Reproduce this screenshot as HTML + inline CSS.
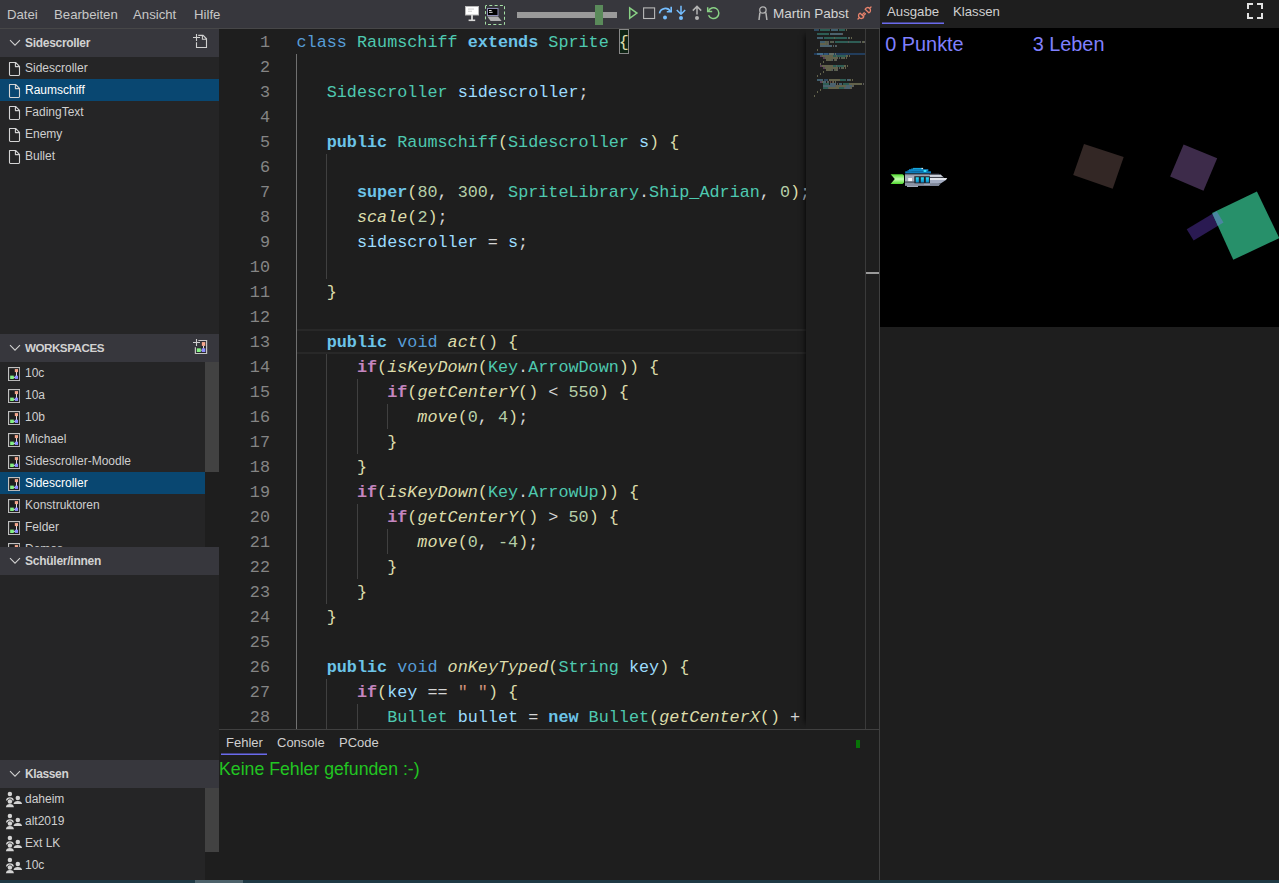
<!DOCTYPE html>
<html lang="de">
<head>
<meta charset="utf-8">
<title>Online-IDE</title>
<style>
*{box-sizing:border-box;margin:0;padding:0}
html,body{width:1279px;height:883px;overflow:hidden;background:#1e1e1e}
body{position:relative;font-family:"Liberation Sans",sans-serif;color:#cccccc;font-size:12px}
.abs{position:absolute}
/* top bar */
#topbar{position:absolute;left:0;top:0;width:880px;height:28px;background:#37373d}
#topline{position:absolute;left:0;top:28px;width:880px;height:1px;background:#474748}
.menu{position:absolute;top:0;height:28px;line-height:29px;font-size:13.2px;color:#c8c8c8;white-space:nowrap}
/* sidebar */
#side{position:absolute;left:0;top:29px;width:219px;height:851px;background:#252526}
.shead{position:absolute;left:0;width:219px;height:28px;background:#37373d}
.shead span{position:absolute;left:25px;top:0;line-height:28px;font-weight:bold;font-size:12px;color:#d2d2d2;white-space:nowrap}
.shead svg.chev{position:absolute;left:9px;top:10px}
.item{position:absolute;left:0;height:22px;line-height:22px;font-size:12px;color:#cfcfcf;white-space:nowrap}
.item span{position:absolute;left:25px;top:0}
.item svg{position:absolute;left:8px;top:4px}
.sel{background:#094771;color:#ffffff}
.sbar{position:absolute;left:205px;width:14px;background:#1e1e1e}
.sthumb{position:absolute;left:205px;width:14px;background:#424242}
/* editor */
#editor{position:absolute;left:219px;top:29px;width:661px;height:700px;background:#1e1e1e;overflow:hidden}
.ln{position:absolute;left:0;width:51px;height:25px;line-height:25px;text-align:right;color:#858585;font-family:"Liberation Mono",monospace;font-size:16.8px;white-space:pre}
.cl{position:absolute;left:77.5px;height:25px;line-height:25px;color:#d4d4d4;font-family:"Liberation Mono",monospace;font-size:16.8px;white-space:pre}
.k{color:#569cd6}.t{color:#4ec9b0}.b{color:#6cc4e8;font-weight:bold}.v{color:#9cdcfe}.m{color:#dcdcaa;font-style:italic}
.c{color:#c586c0;font-weight:bold}.n{color:#b5cea8}.s{color:#ce9178}.p{color:#dcdcaa}.o{color:#d4d4d4}
.pm{color:#dcdcaa}
#bm{position:absolute;left:400px;top:0;width:10px;height:25px;background:#0f2314;border:1px solid #888}
.ig{position:absolute;width:1px;background:#404040}
.iga{background:#707070}
#codeclip{position:absolute;left:0;top:1px;width:587px;height:700px;overflow:hidden}
#curline{position:absolute;left:78px;top:300px;width:509px;height:25px;border-top:2px solid #282828;border-bottom:2px solid #282828}
#mm{position:absolute;left:587px;top:0;width:59px;height:700px;background:#1e1e1e;box-shadow:-6px 0 6px -6px #000}
#mm i{position:absolute;height:1.5px;opacity:.56}
#mmhl{position:absolute;left:8px;top:24px;width:51px;height:2px;background:#223d5c}
#ovl{position:absolute;left:646px;top:0;width:1px;height:700px;background:#3a3a3a}
#ovr{position:absolute;left:660px;top:0;width:1px;height:700px;background:#404040}
#ovmark{position:absolute;left:647px;top:243px;width:13px;height:2px;background:#9a9a9a}
/* bottom panel */
#bline{position:absolute;left:219px;top:729px;width:661px;height:1px;background:#404040}
.tab{position:absolute;font-size:13.2px;color:#d0d0d0;white-space:nowrap;line-height:16px}
.uline{position:absolute;height:2px;background:#6a6aec}
#nofehler{position:absolute;left:219px;top:759px;font-size:17.7px;line-height:20px;color:#22c522;white-space:nowrap}
/* right */
#right{position:absolute;left:880px;top:0;width:399px;height:883px;background:#1e1e1e}
#canvas{position:absolute;left:0;top:28px;width:399px;height:299px;background:#000;overflow:hidden}
.ctext{position:absolute;font-size:19.85px;line-height:22px;color:#8080ff;white-space:nowrap}
#bottombar{position:absolute;left:0;top:880px;width:1279px;height:3px;background:#1f3a45}
#bottomthumb{position:absolute;left:195px;top:880px;width:48px;height:3px;background:#4d636b}
</style>
</head>
<body>
<!-- TOP BAR -->
<div id="topbar">
  <div class="menu" style="left:7px">Datei</div>
  <div class="menu" style="left:54px">Bearbeiten</div>
  <div class="menu" style="left:133px">Ansicht</div>
  <div class="menu" style="left:194px">Hilfe</div>

  <!-- whiteboard icon -->
  <svg class="abs" style="left:464px;top:4px" width="18" height="20" viewBox="0 0 18 20">
    <rect x="1.5" y="2.5" width="13" height="8.5" fill="#ffffff" stroke="#b8b8b8" stroke-width="1"/>
    <rect x="4" y="4.6" width="6" height="0.9" fill="#c8c8c8"/>
    <rect x="4" y="6.8" width="4" height="0.9" fill="#c8c8c8"/>
    <rect x="7" y="11" width="2" height="5" fill="#c8c8c8"/>
    <rect x="4.6" y="15.5" width="6.6" height="1.6" fill="#d8d8d8"/>
  </svg>
  <!-- laptop icon with dashed box -->
  <svg class="abs" style="left:484px;top:4px" width="22" height="22" viewBox="0 0 22 22">
    <rect x="1.5" y="1.5" width="19" height="19" fill="none" stroke="#a6e0a6" stroke-width="1" stroke-dasharray="3 2.3" stroke-dashoffset="1.5"/>
    <rect x="3.5" y="4.5" width="10.5" height="7" fill="#000" stroke="#8c8cb4" stroke-width="1"/>
    <rect x="5" y="6" width="2.6" height="1" fill="#e0e0e0"/>
    <rect x="5" y="7.8" width="3.6" height="1" fill="#e0e0e0"/>
    <polygon points="3.3,12.4 14,12.4 17.6,17 6.6,17" fill="#b0b0b0"/>
  </svg>
  <!-- slider -->
  <div class="abs" style="left:517px;top:12px;width:100px;height:6px;background:#9a9a9a"></div>
  <div class="abs" style="left:595px;top:5px;width:8px;height:20px;background:#5a8a5a"></div>
  <!-- run controls -->
  <svg class="abs" style="left:626px;top:2px" width="100" height="24" viewBox="0 0 100 24">
    <!-- play -->
    <polygon points="3.7,5.9 3.7,16.3 10.9,11.1" fill="none" stroke="#89d185" stroke-width="1.5" stroke-linejoin="miter"/>
    <!-- stop -->
    <rect x="17.6" y="5.9" width="11" height="10.6" fill="none" stroke="#b8b8b8" stroke-width="1.1"/>
    <!-- step over -->
    <path d="M33.5 11.4 A5.9 5.9 0 0 1 44.4 9.4" fill="none" stroke="#75beff" stroke-width="1.7"/>
    <path d="M45.2 4.8 L45.2 9.8 L40.8 9.8" fill="none" stroke="#75beff" stroke-width="1.6"/>
    <circle cx="39" cy="15.4" r="2" fill="#75beff"/>
    <!-- step into -->
    <path d="M55 3.8 L55 11.8 M50.8 8 L55 12.2 L59.2 8" fill="none" stroke="#75beff" stroke-width="1.5"/>
    <circle cx="55" cy="16" r="2" fill="#75beff"/>
    <!-- step out -->
    <path d="M71 12.6 L71 4.6 M66.8 8.6 L71 4.4 L75.2 8.6" fill="none" stroke="#b4b4b4" stroke-width="1.5"/>
    <circle cx="71" cy="16" r="2" fill="#b4b4b4"/>
    <!-- restart -->
    <path d="M82.4 9.2 A5.4 5.4 0 1 1 82.5 13.3" fill="none" stroke="#89d185" stroke-width="1.5"/>
    <path d="M81.7 5.2 L81.7 9.6 L86.2 9.6" fill="none" stroke="#89d185" stroke-width="1.5"/>
  </svg>
  <!-- user -->
  <svg class="abs" style="left:756px;top:5px" width="14" height="17" viewBox="0 0 14 17">
    <circle cx="6.9" cy="5" r="3.2" fill="none" stroke="#b4b4b4" stroke-width="1.3"/>
    <path d="M3 15 L3.9 7.6 M10.9 15 L9.9 7.6" fill="none" stroke="#b4b4b4" stroke-width="1.5"/>
  </svg>
  <div class="menu" style="left:773px;top:-1px;color:#d4d4d4;font-size:13.5px">Martin Pabst</div>
  <!-- plug -->
  <svg class="abs" style="left:856px;top:5px" width="17" height="16" viewBox="0 0 17 16">
    <g fill="none" stroke="#e8836c" stroke-width="1.3" stroke-linecap="round">
      <path d="M9.2 4.2 L12.8 7.8 A2.6 2.6 0 0 0 13.6 3.4 A2.6 2.6 0 0 0 9.2 4.2 Z"/>
      <path d="M7.8 11.8 L4.2 8.2 A2.6 2.6 0 0 0 3.4 12.6 A2.6 2.6 0 0 0 7.8 11.8 Z"/>
      <path d="M13.8 3.2 L15 2 M3.2 12.8 L2 14 M6.6 9.4 L8.2 7.8 M7.8 10.4 L9.4 8.8"/>
    </g>
  </svg>
</div>
<div id="topline"></div>

<!-- SIDEBAR -->
<div id="side">
  <div class="shead" style="top:0">
    <svg class="chev" width="12" height="8" viewBox="0 0 12 8"><path d="M1 1.2 L6 6.2 L11 1.2" fill="none" stroke="#d0d0d0" stroke-width="1.1"/></svg>
    <span style="letter-spacing:-0.3px">Sidescroller</span>
    <svg class="abs" style="left:192px;top:4px" width="16" height="16" viewBox="0 0 16 16">
      <path d="M1 4.5 H8 M4.5 1 V8" stroke="#d0d0d0" stroke-width="1.1" fill="none"/>
      <path d="M4.5 9.2 V14.5 H14.5 V5.8 L11.1 2.4 H6.2 M10.4 2.4 V6.3 H14.5" stroke="#d0d0d0" stroke-width="1.1" fill="none"/>
    </svg>
  </div>
  <div class="item" style="top:28px;width:219px"><svg width="13" height="16" viewBox="0 0 13 16"><path d="M1.5 1.5 H7.6 L11.5 5.4 V13.6 Q11.5 14.5 10.6 14.5 H2.4 Q1.5 14.5 1.5 13.6 Z M7.4 1.6 V5.6 H11.4" fill="none" stroke="#d4d4d4" stroke-width="1.1" stroke-linejoin="round"/></svg><span>Sidescroller</span></div>
<div class="item sel" style="top:50px;width:219px"><svg width="13" height="16" viewBox="0 0 13 16"><path d="M1.5 1.5 H7.6 L11.5 5.4 V13.6 Q11.5 14.5 10.6 14.5 H2.4 Q1.5 14.5 1.5 13.6 Z M7.4 1.6 V5.6 H11.4" fill="none" stroke="#d4d4d4" stroke-width="1.1" stroke-linejoin="round"/></svg><span>Raumschiff</span></div>
<div class="item" style="top:72px;width:219px"><svg width="13" height="16" viewBox="0 0 13 16"><path d="M1.5 1.5 H7.6 L11.5 5.4 V13.6 Q11.5 14.5 10.6 14.5 H2.4 Q1.5 14.5 1.5 13.6 Z M7.4 1.6 V5.6 H11.4" fill="none" stroke="#d4d4d4" stroke-width="1.1" stroke-linejoin="round"/></svg><span>FadingText</span></div>
<div class="item" style="top:94px;width:219px"><svg width="13" height="16" viewBox="0 0 13 16"><path d="M1.5 1.5 H7.6 L11.5 5.4 V13.6 Q11.5 14.5 10.6 14.5 H2.4 Q1.5 14.5 1.5 13.6 Z M7.4 1.6 V5.6 H11.4" fill="none" stroke="#d4d4d4" stroke-width="1.1" stroke-linejoin="round"/></svg><span>Enemy</span></div>
<div class="item" style="top:116px;width:219px"><svg width="13" height="16" viewBox="0 0 13 16"><path d="M1.5 1.5 H7.6 L11.5 5.4 V13.6 Q11.5 14.5 10.6 14.5 H2.4 Q1.5 14.5 1.5 13.6 Z M7.4 1.6 V5.6 H11.4" fill="none" stroke="#d4d4d4" stroke-width="1.1" stroke-linejoin="round"/></svg><span>Bullet</span></div>

  <div class="shead" style="top:305px">
    <svg class="chev" width="12" height="8" viewBox="0 0 12 8"><path d="M1 1.2 L6 6.2 L11 1.2" fill="none" stroke="#d0d0d0" stroke-width="1.1"/></svg>
    <span style="font-size:11.6px;letter-spacing:-0.46px">WORKSPACES</span>
    <svg class="abs" style="left:192px;top:4px" width="18" height="18" viewBox="0 0 18 18">
      <rect x="9" y="3.4" width="5" height="11.6" fill="#2a2a2e"/><rect x="4" y="9.6" width="6" height="5.4" fill="#2a2a2e"/>
      <path d="M1 4.5 H8 M4.5 1 V8" stroke="#d0d0d0" stroke-width="1.1" fill="none"/>
      <path d="M3.4 9.3 V15.5 H14.6 V2.5 H6.3" stroke="#c4c4c4" stroke-width="1.2" fill="none"/>
      <rect x="9.8" y="4.1" width="3.5" height="3.8" fill="#f6a88e"/>
      <rect x="4.8" y="10.3" width="4" height="3.7" fill="#84f084"/>
      <rect x="9.8" y="10.3" width="3.5" height="3.7" fill="#8c8cff"/>
      <path d="M11.5 7.9 V10.3 M8.8 12.2 H9.8" stroke="#f0f0f0" stroke-width="0.9"/>
    </svg>
  </div>
  <div class="abs" style="left:0;top:333px;width:219px;height:185px;overflow:hidden">
    <div class="item" style="top:0px;width:205px"><svg style="top:4.8px" width="12.3" height="14.2" viewBox="0 0 13 15" preserveAspectRatio="none"><rect x="0.6" y="0.6" width="11.8" height="13.8" fill="#1e1e1e" stroke="#c0c0c0" stroke-width="1.2"/><path d="M9 4.5 V9.5 M5 11 H7.4" stroke="#fff" stroke-width="0.9"/><rect x="7.2" y="2.2" width="3.4" height="3.2" fill="#f4a58a"/><rect x="2.3" y="9.1" width="3.8" height="3.6" fill="#84f084"/><rect x="7.2" y="9.2" width="3.4" height="3.4" fill="#8c8cff"/></svg><span>10c</span></div>
<div class="item" style="top:22px;width:205px"><svg style="top:4.8px" width="12.3" height="14.2" viewBox="0 0 13 15" preserveAspectRatio="none"><rect x="0.6" y="0.6" width="11.8" height="13.8" fill="#1e1e1e" stroke="#c0c0c0" stroke-width="1.2"/><path d="M9 4.5 V9.5 M5 11 H7.4" stroke="#fff" stroke-width="0.9"/><rect x="7.2" y="2.2" width="3.4" height="3.2" fill="#f4a58a"/><rect x="2.3" y="9.1" width="3.8" height="3.6" fill="#84f084"/><rect x="7.2" y="9.2" width="3.4" height="3.4" fill="#8c8cff"/></svg><span>10a</span></div>
<div class="item" style="top:44px;width:205px"><svg style="top:4.8px" width="12.3" height="14.2" viewBox="0 0 13 15" preserveAspectRatio="none"><rect x="0.6" y="0.6" width="11.8" height="13.8" fill="#1e1e1e" stroke="#c0c0c0" stroke-width="1.2"/><path d="M9 4.5 V9.5 M5 11 H7.4" stroke="#fff" stroke-width="0.9"/><rect x="7.2" y="2.2" width="3.4" height="3.2" fill="#f4a58a"/><rect x="2.3" y="9.1" width="3.8" height="3.6" fill="#84f084"/><rect x="7.2" y="9.2" width="3.4" height="3.4" fill="#8c8cff"/></svg><span>10b</span></div>
<div class="item" style="top:66px;width:205px"><svg style="top:4.8px" width="12.3" height="14.2" viewBox="0 0 13 15" preserveAspectRatio="none"><rect x="0.6" y="0.6" width="11.8" height="13.8" fill="#1e1e1e" stroke="#c0c0c0" stroke-width="1.2"/><path d="M9 4.5 V9.5 M5 11 H7.4" stroke="#fff" stroke-width="0.9"/><rect x="7.2" y="2.2" width="3.4" height="3.2" fill="#f4a58a"/><rect x="2.3" y="9.1" width="3.8" height="3.6" fill="#84f084"/><rect x="7.2" y="9.2" width="3.4" height="3.4" fill="#8c8cff"/></svg><span>Michael</span></div>
<div class="item" style="top:88px;width:205px"><svg style="top:4.8px" width="12.3" height="14.2" viewBox="0 0 13 15" preserveAspectRatio="none"><rect x="0.6" y="0.6" width="11.8" height="13.8" fill="#1e1e1e" stroke="#c0c0c0" stroke-width="1.2"/><path d="M9 4.5 V9.5 M5 11 H7.4" stroke="#fff" stroke-width="0.9"/><rect x="7.2" y="2.2" width="3.4" height="3.2" fill="#f4a58a"/><rect x="2.3" y="9.1" width="3.8" height="3.6" fill="#84f084"/><rect x="7.2" y="9.2" width="3.4" height="3.4" fill="#8c8cff"/></svg><span>Sidescroller-Moodle</span></div>
<div class="item sel" style="top:110px;width:205px"><svg style="top:4.8px" width="12.3" height="14.2" viewBox="0 0 13 15" preserveAspectRatio="none"><rect x="0.6" y="0.6" width="11.8" height="13.8" fill="#1e1e1e" stroke="#c0c0c0" stroke-width="1.2"/><path d="M9 4.5 V9.5 M5 11 H7.4" stroke="#fff" stroke-width="0.9"/><rect x="7.2" y="2.2" width="3.4" height="3.2" fill="#f4a58a"/><rect x="2.3" y="9.1" width="3.8" height="3.6" fill="#84f084"/><rect x="7.2" y="9.2" width="3.4" height="3.4" fill="#8c8cff"/></svg><span>Sidescroller</span></div>
<div class="item" style="top:132px;width:205px"><svg style="top:4.8px" width="12.3" height="14.2" viewBox="0 0 13 15" preserveAspectRatio="none"><rect x="0.6" y="0.6" width="11.8" height="13.8" fill="#1e1e1e" stroke="#c0c0c0" stroke-width="1.2"/><path d="M9 4.5 V9.5 M5 11 H7.4" stroke="#fff" stroke-width="0.9"/><rect x="7.2" y="2.2" width="3.4" height="3.2" fill="#f4a58a"/><rect x="2.3" y="9.1" width="3.8" height="3.6" fill="#84f084"/><rect x="7.2" y="9.2" width="3.4" height="3.4" fill="#8c8cff"/></svg><span>Konstruktoren</span></div>
<div class="item" style="top:154px;width:205px"><svg style="top:4.8px" width="12.3" height="14.2" viewBox="0 0 13 15" preserveAspectRatio="none"><rect x="0.6" y="0.6" width="11.8" height="13.8" fill="#1e1e1e" stroke="#c0c0c0" stroke-width="1.2"/><path d="M9 4.5 V9.5 M5 11 H7.4" stroke="#fff" stroke-width="0.9"/><rect x="7.2" y="2.2" width="3.4" height="3.2" fill="#f4a58a"/><rect x="2.3" y="9.1" width="3.8" height="3.6" fill="#84f084"/><rect x="7.2" y="9.2" width="3.4" height="3.4" fill="#8c8cff"/></svg><span>Felder</span></div>
<div class="item" style="top:176px;width:205px"><svg style="top:4.8px" width="12.3" height="14.2" viewBox="0 0 13 15" preserveAspectRatio="none"><rect x="0.6" y="0.6" width="11.8" height="13.8" fill="#1e1e1e" stroke="#c0c0c0" stroke-width="1.2"/><path d="M9 4.5 V9.5 M5 11 H7.4" stroke="#fff" stroke-width="0.9"/><rect x="7.2" y="2.2" width="3.4" height="3.2" fill="#f4a58a"/><rect x="2.3" y="9.1" width="3.8" height="3.6" fill="#84f084"/><rect x="7.2" y="9.2" width="3.4" height="3.4" fill="#8c8cff"/></svg><span>Demos</span></div>

  </div>
  <div class="sbar" style="top:333px;height:185px"></div>
  <div class="sthumb" style="top:333px;height:110px"></div>
  <div class="shead" style="top:518px">
    <svg class="chev" width="12" height="8" viewBox="0 0 12 8"><path d="M1 1.2 L6 6.2 L11 1.2" fill="none" stroke="#d0d0d0" stroke-width="1.1"/></svg>
    <span style="letter-spacing:-0.25px">Schüler/innen</span>
  </div>
  <div class="shead" style="top:731px">
    <svg class="chev" width="12" height="8" viewBox="0 0 12 8"><path d="M1 1.2 L6 6.2 L11 1.2" fill="none" stroke="#d0d0d0" stroke-width="1.1"/></svg>
    <span style="letter-spacing:-0.38px">Klassen</span>
  </div>
  <div class="abs" style="left:0;top:759px;width:219px;height:92px;overflow:hidden">
    <div class="item" style="top:0px;width:205px"><svg style="left:0;top:0" width="24" height="22" viewBox="0 0 24 22"><g fill="#d4d4d4"><circle cx="9.9" cy="6.1" r="2.25"/><path d="M5.9 12.4 Q6.4 9.2 9.9 9.2 Q13.4 9.2 13.9 12.4 L12.6 12.4 Q11.6 10.6 9.9 10.6 Q8.2 10.6 7.2 12.4 Z"/><circle cx="9.9" cy="13.4" r="2.25"/><path d="M5.9 19.2 Q6.3 16 9.9 16 Q13.5 16 13.9 19.2 Z"/><circle cx="17.8" cy="10" r="2.25"/><path d="M13.5 16 Q14 12.9 17.8 12.9 Q21.6 12.9 22.1 16 Z"/></g></svg><span>daheim</span></div>
<div class="item" style="top:22px;width:205px"><svg style="left:0;top:0" width="24" height="22" viewBox="0 0 24 22"><g fill="#d4d4d4"><circle cx="9.9" cy="6.1" r="2.25"/><path d="M5.9 12.4 Q6.4 9.2 9.9 9.2 Q13.4 9.2 13.9 12.4 L12.6 12.4 Q11.6 10.6 9.9 10.6 Q8.2 10.6 7.2 12.4 Z"/><circle cx="9.9" cy="13.4" r="2.25"/><path d="M5.9 19.2 Q6.3 16 9.9 16 Q13.5 16 13.9 19.2 Z"/><circle cx="17.8" cy="10" r="2.25"/><path d="M13.5 16 Q14 12.9 17.8 12.9 Q21.6 12.9 22.1 16 Z"/></g></svg><span>alt2019</span></div>
<div class="item" style="top:44px;width:205px"><svg style="left:0;top:0" width="24" height="22" viewBox="0 0 24 22"><g fill="#d4d4d4"><circle cx="9.9" cy="6.1" r="2.25"/><path d="M5.9 12.4 Q6.4 9.2 9.9 9.2 Q13.4 9.2 13.9 12.4 L12.6 12.4 Q11.6 10.6 9.9 10.6 Q8.2 10.6 7.2 12.4 Z"/><circle cx="9.9" cy="13.4" r="2.25"/><path d="M5.9 19.2 Q6.3 16 9.9 16 Q13.5 16 13.9 19.2 Z"/><circle cx="17.8" cy="10" r="2.25"/><path d="M13.5 16 Q14 12.9 17.8 12.9 Q21.6 12.9 22.1 16 Z"/></g></svg><span>Ext LK</span></div>
<div class="item" style="top:66px;width:205px"><svg style="left:0;top:0" width="24" height="22" viewBox="0 0 24 22"><g fill="#d4d4d4"><circle cx="9.9" cy="6.1" r="2.25"/><path d="M5.9 12.4 Q6.4 9.2 9.9 9.2 Q13.4 9.2 13.9 12.4 L12.6 12.4 Q11.6 10.6 9.9 10.6 Q8.2 10.6 7.2 12.4 Z"/><circle cx="9.9" cy="13.4" r="2.25"/><path d="M5.9 19.2 Q6.3 16 9.9 16 Q13.5 16 13.9 19.2 Z"/><circle cx="17.8" cy="10" r="2.25"/><path d="M13.5 16 Q14 12.9 17.8 12.9 Q21.6 12.9 22.1 16 Z"/></g></svg><span>10c</span></div>

  </div>
  <div class="sbar" style="top:759px;height:92px"></div>
  <div class="sthumb" style="top:759px;height:64px"></div>
</div>

<!-- EDITOR -->
<div id="editor">
<div class="ig iga" style="left:77.0px;top:25px;height:675px"></div>
<div class="ig" style="left:107.2px;top:125px;height:125px"></div>
<div class="ig" style="left:107.2px;top:325px;height:250px"></div>
<div class="ig" style="left:107.2px;top:650px;height:50px"></div>
<div class="ig" style="left:137.5px;top:350px;height:75px"></div>
<div class="ig" style="left:137.5px;top:475px;height:75px"></div>
<div class="ig" style="left:137.5px;top:675px;height:25px"></div>
<div class="ig" style="left:167.7px;top:375px;height:25px"></div>
<div class="ig" style="left:167.7px;top:500px;height:25px"></div>

<div id="curline"></div><div id="bm"></div>
<div id="codeclip">
<div class="ln" style="top:0px">1</div><div class="cl" style="top:0px"><span class="k">class</span> <span class="t">Raumschiff</span> <span class="b">extends</span> <span class="t">Sprite</span> <span class="pm">{</span></div>
<div class="ln" style="top:25px">2</div><div class="cl" style="top:25px"></div>
<div class="ln" style="top:50px">3</div><div class="cl" style="top:50px">   <span class="t">Sidescroller</span> <span class="v">sidescroller</span><span class="o">;</span></div>
<div class="ln" style="top:75px">4</div><div class="cl" style="top:75px"></div>
<div class="ln" style="top:100px">5</div><div class="cl" style="top:100px">   <span class="b">public</span> <span class="t">Raumschiff</span><span class="p">(</span><span class="t">Sidescroller</span> <span class="v">s</span><span class="p">)</span> <span class="p">{</span></div>
<div class="ln" style="top:125px">6</div><div class="cl" style="top:125px"></div>
<div class="ln" style="top:150px">7</div><div class="cl" style="top:150px">      <span class="b">super</span><span class="p">(</span><span class="n">80</span><span class="o">, </span><span class="n">300</span><span class="o">, </span><span class="t">SpriteLibrary</span><span class="o">.</span><span class="t">Ship_Adrian</span><span class="o">, </span><span class="n">0</span><span class="p">)</span><span class="o">;</span></div>
<div class="ln" style="top:175px">8</div><div class="cl" style="top:175px">      <span class="m">scale</span><span class="p">(</span><span class="n">2</span><span class="p">)</span><span class="o">;</span></div>
<div class="ln" style="top:200px">9</div><div class="cl" style="top:200px">      <span class="v">sidescroller</span><span class="o"> = </span><span class="v">s</span><span class="o">;</span></div>
<div class="ln" style="top:225px">10</div><div class="cl" style="top:225px"></div>
<div class="ln" style="top:250px">11</div><div class="cl" style="top:250px">   <span class="p">}</span></div>
<div class="ln" style="top:275px">12</div><div class="cl" style="top:275px"></div>
<div class="ln" style="top:300px">13</div><div class="cl" style="top:300px">   <span class="b">public</span> <span class="k">void</span> <span class="m">act</span><span class="p">()</span> <span class="p">{</span></div>
<div class="ln" style="top:325px">14</div><div class="cl" style="top:325px">      <span class="c">if</span><span class="p">(</span><span class="m">isKeyDown</span><span class="p">(</span><span class="t">Key</span><span class="o">.</span><span class="t">ArrowDown</span><span class="p">))</span> <span class="p">{</span></div>
<div class="ln" style="top:350px">15</div><div class="cl" style="top:350px">         <span class="c">if</span><span class="p">(</span><span class="m">getCenterY</span><span class="p">()</span><span class="o"> &lt; </span><span class="n">550</span><span class="p">)</span> <span class="p">{</span></div>
<div class="ln" style="top:375px">16</div><div class="cl" style="top:375px">            <span class="m">move</span><span class="p">(</span><span class="n">0</span><span class="o">, </span><span class="n">4</span><span class="p">)</span><span class="o">;</span></div>
<div class="ln" style="top:400px">17</div><div class="cl" style="top:400px">         <span class="p">}</span></div>
<div class="ln" style="top:425px">18</div><div class="cl" style="top:425px">      <span class="p">}</span></div>
<div class="ln" style="top:450px">19</div><div class="cl" style="top:450px">      <span class="c">if</span><span class="p">(</span><span class="m">isKeyDown</span><span class="p">(</span><span class="t">Key</span><span class="o">.</span><span class="t">ArrowUp</span><span class="p">))</span> <span class="p">{</span></div>
<div class="ln" style="top:475px">20</div><div class="cl" style="top:475px">         <span class="c">if</span><span class="p">(</span><span class="m">getCenterY</span><span class="p">()</span><span class="o"> &gt; </span><span class="n">50</span><span class="p">)</span> <span class="p">{</span></div>
<div class="ln" style="top:500px">21</div><div class="cl" style="top:500px">            <span class="m">move</span><span class="p">(</span><span class="n">0</span><span class="o">, </span><span class="n">-4</span><span class="p">)</span><span class="o">;</span></div>
<div class="ln" style="top:525px">22</div><div class="cl" style="top:525px">         <span class="p">}</span></div>
<div class="ln" style="top:550px">23</div><div class="cl" style="top:550px">      <span class="p">}</span></div>
<div class="ln" style="top:575px">24</div><div class="cl" style="top:575px">   <span class="p">}</span></div>
<div class="ln" style="top:600px">25</div><div class="cl" style="top:600px"></div>
<div class="ln" style="top:625px">26</div><div class="cl" style="top:625px">   <span class="b">public</span> <span class="k">void</span> <span class="m">onKeyTyped</span><span class="p">(</span><span class="t">String</span> <span class="v">key</span><span class="p">)</span> <span class="p">{</span></div>
<div class="ln" style="top:650px">27</div><div class="cl" style="top:650px">      <span class="c">if</span><span class="p">(</span><span class="v">key</span><span class="o"> == </span><span class="s">" "</span><span class="p">)</span> <span class="p">{</span></div>
<div class="ln" style="top:675px">28</div><div class="cl" style="top:675px">         <span class="t">Bullet</span> <span class="v">bullet</span><span class="o"> = </span><span class="b">new</span> <span class="t">Bullet</span><span class="p">(</span><span class="m">getCenterX</span><span class="p">()</span><span class="o"> +</span></div>
</div>
<div id="mm">
<div id="mmhl"></div>
<i style="left:8.0px;top:0.3px;width:5.0px;background:#3f6d93"></i><i style="left:14.0px;top:0.3px;width:10.0px;background:#3a8f80"></i><i style="left:25.0px;top:0.3px;width:7.0px;background:#5d93ad"></i><i style="left:33.0px;top:0.3px;width:6.0px;background:#3a8f80"></i><i style="left:40.0px;top:0.3px;width:1.0px;background:#98986f"></i>

<i style="left:11.0px;top:4.3px;width:12.0px;background:#3a8f80"></i><i style="left:24.0px;top:4.3px;width:12.0px;background:#6f97ad"></i><i style="left:36.0px;top:4.3px;width:1.0px;background:#8a8a8a"></i>

<i style="left:11.0px;top:8.3px;width:6.0px;background:#5d93ad"></i><i style="left:18.0px;top:8.3px;width:10.0px;background:#3a8f80"></i><i style="left:28.0px;top:8.3px;width:1.0px;background:#98986f"></i><i style="left:29.0px;top:8.3px;width:12.0px;background:#3a8f80"></i><i style="left:42.0px;top:8.3px;width:1.0px;background:#6f97ad"></i><i style="left:43.0px;top:8.3px;width:1.0px;background:#98986f"></i><i style="left:45.0px;top:8.3px;width:1.0px;background:#98986f"></i>

<i style="left:14.0px;top:12.3px;width:5.0px;background:#5d93ad"></i><i style="left:19.0px;top:12.3px;width:1.0px;background:#98986f"></i><i style="left:20.0px;top:12.3px;width:2.0px;background:#7f8f76"></i><i style="left:22.0px;top:12.3px;width:1.0px;background:#8a8a8a"></i><i style="left:24.0px;top:12.3px;width:3.0px;background:#7f8f76"></i><i style="left:27.0px;top:12.3px;width:1.0px;background:#8a8a8a"></i><i style="left:29.0px;top:12.3px;width:13.0px;background:#3a8f80"></i><i style="left:42.0px;top:12.3px;width:1.0px;background:#8a8a8a"></i><i style="left:43.0px;top:12.3px;width:11.0px;background:#3a8f80"></i><i style="left:54.0px;top:12.3px;width:1.0px;background:#8a8a8a"></i><i style="left:56.0px;top:12.3px;width:1.0px;background:#7f8f76"></i><i style="left:57.0px;top:12.3px;width:1.0px;background:#98986f"></i><i style="left:58.0px;top:12.3px;width:1.0px;background:#8a8a8a"></i>
<i style="left:14.0px;top:14.3px;width:5.0px;background:#98986f"></i><i style="left:19.0px;top:14.3px;width:1.0px;background:#98986f"></i><i style="left:20.0px;top:14.3px;width:1.0px;background:#7f8f76"></i><i style="left:21.0px;top:14.3px;width:1.0px;background:#98986f"></i><i style="left:22.0px;top:14.3px;width:1.0px;background:#8a8a8a"></i>
<i style="left:14.0px;top:16.3px;width:12.0px;background:#6f97ad"></i><i style="left:27.0px;top:16.3px;width:1.0px;background:#8a8a8a"></i><i style="left:29.0px;top:16.3px;width:1.0px;background:#6f97ad"></i><i style="left:30.0px;top:16.3px;width:1.0px;background:#8a8a8a"></i>

<i style="left:11.0px;top:20.3px;width:1.0px;background:#98986f"></i>

<i style="left:11.0px;top:24.3px;width:6.0px;background:#5d93ad"></i><i style="left:18.0px;top:24.3px;width:4.0px;background:#3f6d93"></i><i style="left:23.0px;top:24.3px;width:3.0px;background:#98986f"></i><i style="left:26.0px;top:24.3px;width:2.0px;background:#98986f"></i><i style="left:29.0px;top:24.3px;width:1.0px;background:#98986f"></i>
<i style="left:14.0px;top:26.3px;width:2.0px;background:#8a5f86"></i><i style="left:16.0px;top:26.3px;width:1.0px;background:#98986f"></i><i style="left:17.0px;top:26.3px;width:9.0px;background:#98986f"></i><i style="left:26.0px;top:26.3px;width:1.0px;background:#98986f"></i><i style="left:27.0px;top:26.3px;width:3.0px;background:#3a8f80"></i><i style="left:30.0px;top:26.3px;width:1.0px;background:#8a8a8a"></i><i style="left:31.0px;top:26.3px;width:9.0px;background:#3a8f80"></i><i style="left:40.0px;top:26.3px;width:2.0px;background:#98986f"></i><i style="left:43.0px;top:26.3px;width:1.0px;background:#98986f"></i>
<i style="left:17.0px;top:28.3px;width:2.0px;background:#8a5f86"></i><i style="left:19.0px;top:28.3px;width:1.0px;background:#98986f"></i><i style="left:20.0px;top:28.3px;width:10.0px;background:#98986f"></i><i style="left:30.0px;top:28.3px;width:2.0px;background:#98986f"></i><i style="left:33.0px;top:28.3px;width:1.0px;background:#8a8a8a"></i><i style="left:35.0px;top:28.3px;width:3.0px;background:#7f8f76"></i><i style="left:38.0px;top:28.3px;width:1.0px;background:#98986f"></i><i style="left:40.0px;top:28.3px;width:1.0px;background:#98986f"></i>
<i style="left:20.0px;top:30.3px;width:4.0px;background:#98986f"></i><i style="left:24.0px;top:30.3px;width:1.0px;background:#98986f"></i><i style="left:25.0px;top:30.3px;width:1.0px;background:#7f8f76"></i><i style="left:26.0px;top:30.3px;width:1.0px;background:#8a8a8a"></i><i style="left:28.0px;top:30.3px;width:1.0px;background:#7f8f76"></i><i style="left:29.0px;top:30.3px;width:1.0px;background:#98986f"></i><i style="left:30.0px;top:30.3px;width:1.0px;background:#8a8a8a"></i>
<i style="left:17.0px;top:32.3px;width:1.0px;background:#98986f"></i>
<i style="left:14.0px;top:34.3px;width:1.0px;background:#98986f"></i>
<i style="left:14.0px;top:36.3px;width:2.0px;background:#8a5f86"></i><i style="left:16.0px;top:36.3px;width:1.0px;background:#98986f"></i><i style="left:17.0px;top:36.3px;width:9.0px;background:#98986f"></i><i style="left:26.0px;top:36.3px;width:1.0px;background:#98986f"></i><i style="left:27.0px;top:36.3px;width:3.0px;background:#3a8f80"></i><i style="left:30.0px;top:36.3px;width:1.0px;background:#8a8a8a"></i><i style="left:31.0px;top:36.3px;width:7.0px;background:#3a8f80"></i><i style="left:38.0px;top:36.3px;width:2.0px;background:#98986f"></i><i style="left:41.0px;top:36.3px;width:1.0px;background:#98986f"></i>
<i style="left:17.0px;top:38.3px;width:2.0px;background:#8a5f86"></i><i style="left:19.0px;top:38.3px;width:1.0px;background:#98986f"></i><i style="left:20.0px;top:38.3px;width:10.0px;background:#98986f"></i><i style="left:30.0px;top:38.3px;width:2.0px;background:#98986f"></i><i style="left:33.0px;top:38.3px;width:1.0px;background:#8a8a8a"></i><i style="left:35.0px;top:38.3px;width:2.0px;background:#7f8f76"></i><i style="left:37.0px;top:38.3px;width:1.0px;background:#98986f"></i><i style="left:39.0px;top:38.3px;width:1.0px;background:#98986f"></i>
<i style="left:20.0px;top:40.3px;width:4.0px;background:#98986f"></i><i style="left:24.0px;top:40.3px;width:1.0px;background:#98986f"></i><i style="left:25.0px;top:40.3px;width:1.0px;background:#7f8f76"></i><i style="left:26.0px;top:40.3px;width:1.0px;background:#8a8a8a"></i><i style="left:28.0px;top:40.3px;width:2.0px;background:#7f8f76"></i><i style="left:30.0px;top:40.3px;width:1.0px;background:#98986f"></i><i style="left:31.0px;top:40.3px;width:1.0px;background:#8a8a8a"></i>
<i style="left:17.0px;top:42.3px;width:1.0px;background:#98986f"></i>
<i style="left:14.0px;top:44.3px;width:1.0px;background:#98986f"></i>
<i style="left:11.0px;top:46.3px;width:1.0px;background:#98986f"></i>

<i style="left:11.0px;top:50.3px;width:6.0px;background:#5d93ad"></i><i style="left:18.0px;top:50.3px;width:4.0px;background:#3f6d93"></i><i style="left:23.0px;top:50.3px;width:10.0px;background:#98986f"></i><i style="left:33.0px;top:50.3px;width:1.0px;background:#98986f"></i><i style="left:34.0px;top:50.3px;width:6.0px;background:#3a8f80"></i><i style="left:41.0px;top:50.3px;width:3.0px;background:#6f97ad"></i><i style="left:44.0px;top:50.3px;width:1.0px;background:#98986f"></i><i style="left:46.0px;top:50.3px;width:1.0px;background:#98986f"></i>
<i style="left:14.0px;top:52.3px;width:2.0px;background:#8a5f86"></i><i style="left:16.0px;top:52.3px;width:1.0px;background:#98986f"></i><i style="left:17.0px;top:52.3px;width:3.0px;background:#6f97ad"></i><i style="left:21.0px;top:52.3px;width:2.0px;background:#8a8a8a"></i><i style="left:24.0px;top:52.3px;width:1.0px;background:#8f6654"></i><i style="left:26.0px;top:52.3px;width:1.0px;background:#8f6654"></i><i style="left:27.0px;top:52.3px;width:1.0px;background:#98986f"></i><i style="left:29.0px;top:52.3px;width:1.0px;background:#98986f"></i>
<i style="left:17.0px;top:54.3px;width:6.0px;background:#3a8f80"></i><i style="left:24.0px;top:54.3px;width:6.0px;background:#6f97ad"></i><i style="left:31.0px;top:54.3px;width:1.0px;background:#8a8a8a"></i><i style="left:33.0px;top:54.3px;width:3.0px;background:#5d93ad"></i><i style="left:37.0px;top:54.3px;width:6.0px;background:#3a8f80"></i><i style="left:43.0px;top:54.3px;width:1.0px;background:#98986f"></i><i style="left:44.0px;top:54.3px;width:10.0px;background:#98986f"></i><i style="left:54.0px;top:54.3px;width:2.0px;background:#98986f"></i><i style="left:57.0px;top:54.3px;width:1.0px;background:#8a8a8a"></i>
<i style="left:17.0px;top:56.3px;width:12.0px;background:#6f97ad"></i><i style="left:29.0px;top:56.3px;width:1.0px;background:#8a8a8a"></i><i style="left:30.0px;top:56.3px;width:9.0px;background:#98986f"></i><i style="left:39.0px;top:56.3px;width:1.0px;background:#98986f"></i><i style="left:40.0px;top:56.3px;width:6.0px;background:#6f97ad"></i><i style="left:46.0px;top:56.3px;width:1.0px;background:#98986f"></i><i style="left:47.0px;top:56.3px;width:1.0px;background:#8a8a8a"></i>
<i style="left:17.0px;top:58.3px;width:5.0px;background:#3a8f80"></i><i style="left:22.0px;top:58.3px;width:1.0px;background:#8a8a8a"></i><i style="left:23.0px;top:58.3px;width:9.0px;background:#98986f"></i><i style="left:32.0px;top:58.3px;width:1.0px;background:#98986f"></i><i style="left:33.0px;top:58.3px;width:5.0px;background:#3a8f80"></i><i style="left:38.0px;top:58.3px;width:1.0px;background:#8a8a8a"></i><i style="left:39.0px;top:58.3px;width:5.0px;background:#6f97ad"></i><i style="left:44.0px;top:58.3px;width:1.0px;background:#98986f"></i><i style="left:45.0px;top:58.3px;width:1.0px;background:#8a8a8a"></i>
<i style="left:14.0px;top:60.3px;width:1.0px;background:#98986f"></i>
<i style="left:11.0px;top:62.3px;width:1.0px;background:#98986f"></i>

<i style="left:8.0px;top:66.3px;width:1.0px;background:#98986f"></i>

</div>
<div id="ovl"></div><div id="ovr"></div><div id="ovmark"></div>
</div>

<!-- BOTTOM PANEL -->
<div id="bline"></div>
<div class="tab" style="left:226px;top:735px;font-size:13px">Fehler</div>
<div class="tab" style="left:277px;top:735px;font-size:13px">Console</div>
<div class="tab" style="left:339px;top:735px;font-size:13px">PCode</div>
<div class="uline" style="left:221px;top:753px;width:46px;height:1px;background:#444488"></div><div class="uline" style="left:221px;top:754px;width:46px;height:1px"></div>
<div class="abs" style="left:856px;top:740px;width:4px;height:8px;background:#077407"></div>
<div class="abs" style="left:879px;top:729px;width:1px;height:151px;background:#404040"></div>
<div id="nofehler">Keine Fehler gefunden :-)</div>

<!-- RIGHT PANEL -->
<div id="right">
  <div class="tab" style="left:7px;top:4px">Ausgabe</div>
  <div class="tab" style="left:73px;top:4px">Klassen</div>
  <div class="uline" style="left:2px;top:22px;width:62px;height:1px;background:#444488"></div><div class="uline" style="left:2px;top:23px;width:62px;height:1px"></div>
  <svg class="abs" style="left:367px;top:3px" width="16" height="16" viewBox="0 0 16 16">
    <path d="M1 6 V1 H6 M10 1 H15 V6 M15 10 V15 H10 M6 15 H1 V10" fill="none" stroke="#e2e2e2" stroke-width="2"/>
  </svg>
  <div id="canvas">
    <div class="ctext" style="left:5.3px;top:5px">0 Punkte</div>
    <div class="ctext" style="left:152.7px;top:5px">3 Leben</div>
    <svg class="abs" style="left:0;top:0" width="399" height="299" viewBox="0 0 399 299">
<defs><linearGradient id="fl" x1="0" y1="0" x2="0" y2="1"><stop offset="0" stop-color="#4fd82c"/><stop offset="0.5" stop-color="#c4ffb0"/><stop offset="1" stop-color="#4fd82c"/></linearGradient><linearGradient id="wg" x1="0" y1="0" x2="0" y2="1"><stop offset="0" stop-color="#2ae6ff"/><stop offset="1" stop-color="#0a86c6"/></linearGradient><filter id="bl" x="-5%" y="-10%" width="110%" height="120%"><feGaussianBlur stdDeviation="0.45"/></filter><clipPath id="gc"><polygon points="332.1,185.0 376.9,163.6 399.3,210.0 353.3,231.8"/></clipPath></defs>
<g filter="url(#bl)">
<polygon points="10.6,146.2 22.6,146.2 24.0,147.6 24.0,154.6 22.6,156.0 10.6,156.0 14.8,151.1" fill="url(#fl)"/>
<rect x="25.2" y="143.3" width="25.8" height="2.3" fill="#0a7cbc"/>
<rect x="29.0" y="141.2" width="19.3" height="2.2" fill="#0b86c8"/>
<rect x="32.9" y="139.9" width="9.7" height="1.5" fill="#16a6dc"/>
<rect x="27.5" y="142.2" width="4" height="1.2" fill="#0b86c8"/>
<rect x="31.0" y="140.6" width="3" height="0.9" fill="#0f96d0"/>
<rect x="43.6" y="142.0" width="2.8" height="2" fill="#34e2f8"/>
<rect x="41.5" y="139.9" width="1.6" height="1.2" fill="#d8e8f0"/>
<rect x="25.0" y="145.5" width="34" height="1.1" fill="#2a2d36"/>
<rect x="25.0" y="146.5" width="36" height="8.2" fill="#858da0"/>
<rect x="25.0" y="146.6" width="24" height="1.5" fill="#9aa2b2"/>
<rect x="25.0" y="148.0" width="9" height="5.6" fill="#a4acbc"/>
<rect x="28.2" y="150.0" width="3.8" height="3.2" fill="#f2f4f8"/>
<rect x="25.0" y="153.6" width="25" height="1.1" fill="#30333c"/>
<rect x="25.0" y="154.6" width="33.8" height="3.3" fill="#8891a3"/>
<rect x="44.0" y="155.4" width="8" height="1.2" fill="#b4bccb"/>
<rect x="27.0" y="157.6" width="11" height="1.4" fill="#a2aaba"/>
<rect x="49.6" y="146.9" width="11.6" height="2" fill="#cdd1da"/>
<polygon points="61.0,146.9 63.4,149.0 61.0,149.0" fill="#c4c9d4"/>
<rect x="50.0" y="149.0" width="14" height="0.9" fill="#3a3e48"/>
<polygon points="50.0,150.0 67.2,150.0 66.0,152.1 50.0,152.1" fill="#e2e5ec"/>
<polygon points="50.0,152.1 66.0,152.1 61.0,155.2 50.0,155.2" fill="#a3acc2"/>
<polygon points="50.0,155.2 61.0,155.2 58.6,157.9 50.0,157.9" fill="#7f879a"/>
<rect x="34.4" y="148.3" width="15.5" height="7" fill="#1f2129"/>
<rect x="35.7" y="149.3" width="3.1" height="5.2" fill="url(#wg)"/>
<rect x="40.8" y="149.3" width="3.1" height="5.2" fill="url(#wg)"/>
<rect x="45.8" y="149.3" width="3.1" height="5.2" fill="url(#wg)"/>
</g>
<polygon points="204.0,116.0 243.7,129.1 232.7,160.7 193.2,146.9" fill="#332725"/>
<polygon points="303.6,116.6 337.2,130.3 323.5,162.8 290.1,148.6" fill="#3d2b4a"/>
<polygon points="306.7,201.3 336.7,183.3 343.5,194.5 313.6,212.4" fill="#2a1a52"/>
<polygon points="332.1,185.0 376.9,163.6 399.3,210.0 353.3,231.8" fill="#27906a"/>
<polygon clip-path="url(#gc)" points="306.7,201.3 336.7,183.3 343.5,194.5 313.6,212.4" fill="#4a86a0"/>
</svg>
    
  </div>
</div>
<div id="bottombar"></div><div id="bottomthumb"></div>
</body>
</html>
